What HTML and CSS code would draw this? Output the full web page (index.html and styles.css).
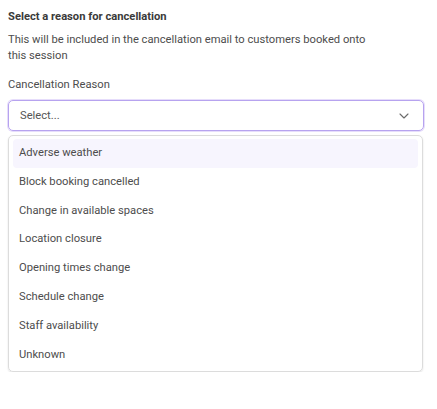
FILE: index.html
```html
<!DOCTYPE html>
<html>
<head>
<meta charset="utf-8">
<link rel="stylesheet" href="styles.css">
</head>
<body>
<div class="panel">
  <h2 class="title">Select a reason for cancellation</h2>
  <p class="desc">This will be included in the cancellation email to customers booked onto this session</p>
  <label class="label">Cancellation Reason</label>
  <div class="select">
    <span class="placeholder">Select...</span>
    <svg class="chev" width="10" height="6" viewBox="0 0 10 6"><path d="M1 1 L5 5 L9 1" fill="none" stroke="#6b6b6b" stroke-width="1.1" stroke-linecap="round" stroke-linejoin="round"/></svg>
  </div>
  <ul class="menu">
    <li class="item active">Adverse weather</li>
    <li class="item">Block booking cancelled</li>
    <li class="item">Change in available spaces</li>
    <li class="item">Location closure</li>
    <li class="item">Opening times change</li>
    <li class="item">Schedule change</li>
    <li class="item">Staff availability</li>
    <li class="item">Unknown</li>
  </ul>
</div>
</body>
</html>
```
FILE: styles.css
```css
html, body {
  margin: 0;
  padding: 0;
  background: #ffffff;
}
body {
  font-family: Roboto, "Liberation Sans", Arial, sans-serif;
  font-size: 11.2px;
  color: #4d4d4d;
}
.panel {
  width: 416px;
  padding: 9px 0 0 8px;
}
.title {
  margin: 0;
  font-size: 11.2px;
  font-weight: 700;
  line-height: 16px;
  color: #3a3a3a;
}
.desc {
  margin: 7px 0 0 0;
  line-height: 16px;
  width: 372px;
}
.label {
  display: block;
  margin-top: 13px;
  line-height: 16px;
}
.select {
  margin-top: 7px;
  height: 31px;
  box-sizing: border-box;
  border: 1.5px solid #b7a3ef;
  border-radius: 5px;
  box-shadow: 0 0 0 1px #e6ddfb;
  display: flex;
  align-items: center;
  justify-content: space-between;
  padding: 0 14px 0 11px;
}
.placeholder {
  color: #555;
}
.chev {
  display: block;
}
.menu {
  list-style: none;
  margin: 4px 1px 0 0;
  padding: 3px 4px 2px 4px;
  border: 1px solid #dcdcdc;
  border-radius: 5px;
  box-shadow: 0 1px 2px rgba(0,0,0,0.12);
}
.item {
  height: 28.8px;
  line-height: 28px;
  padding-left: 6px;
  border-radius: 4px;
}
.item.active {
  background: #f7f5fe;
}
```
